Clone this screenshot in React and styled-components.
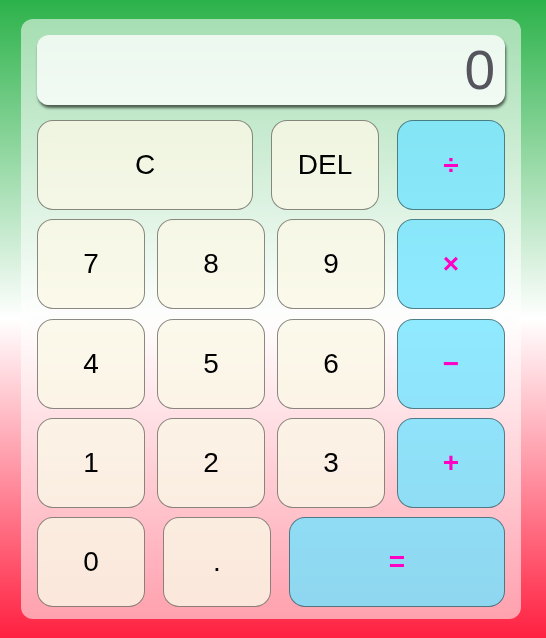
import React from 'react';
import styled, { createGlobalStyle } from 'styled-components';

const GlobalStyle = createGlobalStyle`
  html, body {
    margin: 0;
    padding: 0;
  }
  body {
    font-family: "Liberation Sans", Arial, sans-serif;
  }
`;

const rows = [
  [{ label: 'C', wide: true }, { label: 'DEL' }, { label: '÷', op: true }],
  [{ label: '7' }, { label: '8' }, { label: '9' }, { label: '×', op: true }],
  [{ label: '4' }, { label: '5' }, { label: '6' }, { label: '−', op: true }],
  [{ label: '1' }, { label: '2' }, { label: '3' }, { label: '+', op: true }],
  [{ label: '0' }, { label: '.' }, { label: '=', op: true, wide: true }],
];

const App = () => {
  return (
    <Page>
      <GlobalStyle />
      <Calculator>
        <Display>0</Display>
        <Keypad>
          {rows.map((row, i) => (
            <Row key={i}>
              {row.map((key) => (
                <Key key={key.label} $op={key.op} $wide={key.wide}>
                  {key.label}
                </Key>
              ))}
            </Row>
          ))}
        </Keypad>
      </Calculator>
    </Page>
  );
};

const Page = styled.div`
  box-sizing: border-box;
  width: 100vw;
  height: 638px;
  padding: 19px 0 0 21px;
  background: linear-gradient(to bottom, #2cb24a 0%, #ffffff 50%, #ff2040 100%);
`;

const Calculator = styled.div`
  box-sizing: border-box;
  width: 500px;
  height: 600px;
  padding: 16px 16px 12px;
  border-radius: 12px;
  background-color: rgba(255, 255, 255, 0.55);
  backdrop-filter: blur(12px);
  display: flex;
  flex-direction: column;
  gap: 15px;
`;

const Display = styled.div`
  box-sizing: border-box;
  flex-shrink: 0;
  height: 70px;
  padding: 0 10px;
  border-radius: 12px;
  background-color: rgba(255, 255, 255, 0.78);
  box-shadow: 1px 3px 3px rgba(0, 0, 0, 0.6);
  display: flex;
  align-items: center;
  justify-content: flex-end;
  font-size: 55px;
  color: #55555e;
`;

const Keypad = styled.div`
  flex-shrink: 0;
  height: 487px;
  display: flex;
  flex-direction: column;
  justify-content: space-between;
`;

const Row = styled.div`
  display: flex;
  justify-content: space-between;
`;

const Key = styled.button`
  box-sizing: border-box;
  width: ${(p) => (p.$wide ? '216px' : '108px')};
  height: 90px;
  border-radius: 16px;
  border: 1px solid rgba(0, 0, 0, 0.45);
  background-color: ${(p) =>
    p.$op ? 'rgba(115, 227, 255, 0.8)' : 'rgba(250, 248, 230, 0.8)'};
  color: ${(p) => (p.$op ? '#ff00c4' : '#000')};
  font-family: "Liberation Sans", Arial, sans-serif;
  font-size: 28px;
  font-weight: ${(p) => (p.$op ? 700 : 400)};
  padding: 0;
  cursor: pointer;
`;

export default App;
